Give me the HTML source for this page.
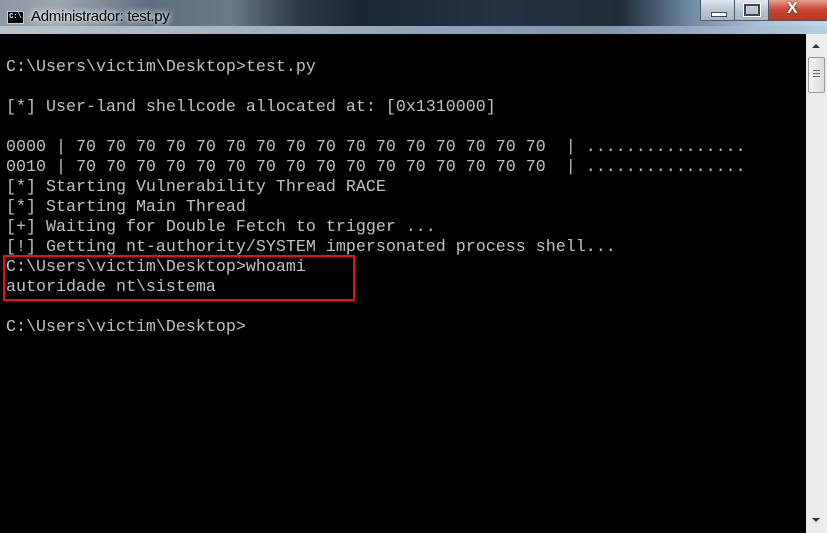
<!DOCTYPE html>
<html><head><style>
html,body{margin:0;padding:0;width:827px;height:533px;overflow:hidden;background:#000}
#tb{position:absolute;left:0;top:0;width:827px;height:34px;
background:linear-gradient(90deg,#8d99a4 0px,#9aa6b0 60px,#5d6e7e 150px,#6a7a88 230px,#2c3846 300px,#1b2633 360px,#243244 500px,#1e2b3a 620px,#6f8aa0 690px,#a9c3d8 760px,#c4d7e6 827px)}
#tb2{position:absolute;left:0;top:26px;width:827px;height:8px;background:linear-gradient(90deg,#b8c4cc,#9eb0c0 300px,#7f95aa 600px,#b7cde0)}
#icon{position:absolute;left:7px;top:11px;width:15px;height:11px;background:#000;border:1px solid #ccc;color:#fff;font:bold 7px "Liberation Mono",monospace;line-height:10px;text-align:center}
#title{position:absolute;left:31px;top:8px;font:15px "Liberation Sans",sans-serif;color:#000;letter-spacing:-0.3px;text-shadow:0 0 6px #fff,0 0 8px #fff}
.btn{position:absolute;top:0;height:20px;border:1px solid #4b5a6b;border-top:none;background:linear-gradient(#dfe8f0,#b9c7d4 50%,#a7b7c6)}
#close{background:linear-gradient(#e8a090,#c8452e 50%,#b83820)}
#con{position:absolute;left:5px;top:34px;width:801px;height:499px;background:#000}
#sb{position:absolute;left:806px;top:34px;width:21px;height:499px;background:#ececec}
pre{position:absolute;left:6px;top:58px;margin:0;font:16.67px/20px "Liberation Mono",monospace;color:#c0c0c0}
#box{position:absolute;left:3px;top:255px;width:348px;height:42px;border:2px solid #e8101a}
</style></head><body>
<div id="tb"></div><div id="tb2"></div>
<div id="icon">C:\</div>
<div id="title">Administrador: test.py</div>
<div class="btn" style="left:700px;width:33px"><div style="position:absolute;left:10px;top:12px;width:14px;height:3px;background:#fff;border:1px solid #445"></div></div>
<div class="btn" style="left:734px;width:33px"><div style="position:absolute;left:9px;top:4px;width:12px;height:8px;border:2px solid #445;background:transparent;box-shadow:0 0 0 1px #fff"></div></div>
<div class="btn" id="close" style="left:768px;width:60px"><div style="position:absolute;left:18px;top:0px;color:#fff;font:bold 16px 'Liberation Sans',sans-serif;text-shadow:0 0 2px #333">X</div></div>
<div id="con"></div>
<div id="sb">
<div style="position:absolute;left:6px;top:10px;width:0;height:0;border-left:4px solid transparent;border-right:4px solid transparent;border-bottom:4px solid #333"></div>
<div style="position:absolute;left:2px;top:23px;width:15px;height:34px;border:1px solid #9a9a9a;border-radius:2px;background:linear-gradient(90deg,#f4f4f4,#dcdcdc)">
<div style="position:absolute;left:4px;top:12px;width:7px;height:1px;background:#666;box-shadow:0 3px 0 #666,0 6px 0 #666"></div></div>
<div style="position:absolute;left:6px;top:484px;width:0;height:0;border-left:4px solid transparent;border-right:4px solid transparent;border-top:4px solid #333"></div>
</div>
<pre>C:\Users\victim\Desktop>test.py

[*] User-land shellcode allocated at: [0x1310000]

0000 | 70 70 70 70 70 70 70 70 70 70 70 70 70 70 70 70  | ................
0010 | 70 70 70 70 70 70 70 70 70 70 70 70 70 70 70 70  | ................
[*] Starting Vulnerability Thread RACE
[*] Starting Main Thread
[+] Waiting for Double Fetch to trigger ...
[!] Getting nt-authority/SYSTEM impersonated process shell...
C:\Users\victim\Desktop>whoami
autoridade nt\sistema

C:\Users\victim\Desktop></pre>
<div id="box"></div>
</body></html>
